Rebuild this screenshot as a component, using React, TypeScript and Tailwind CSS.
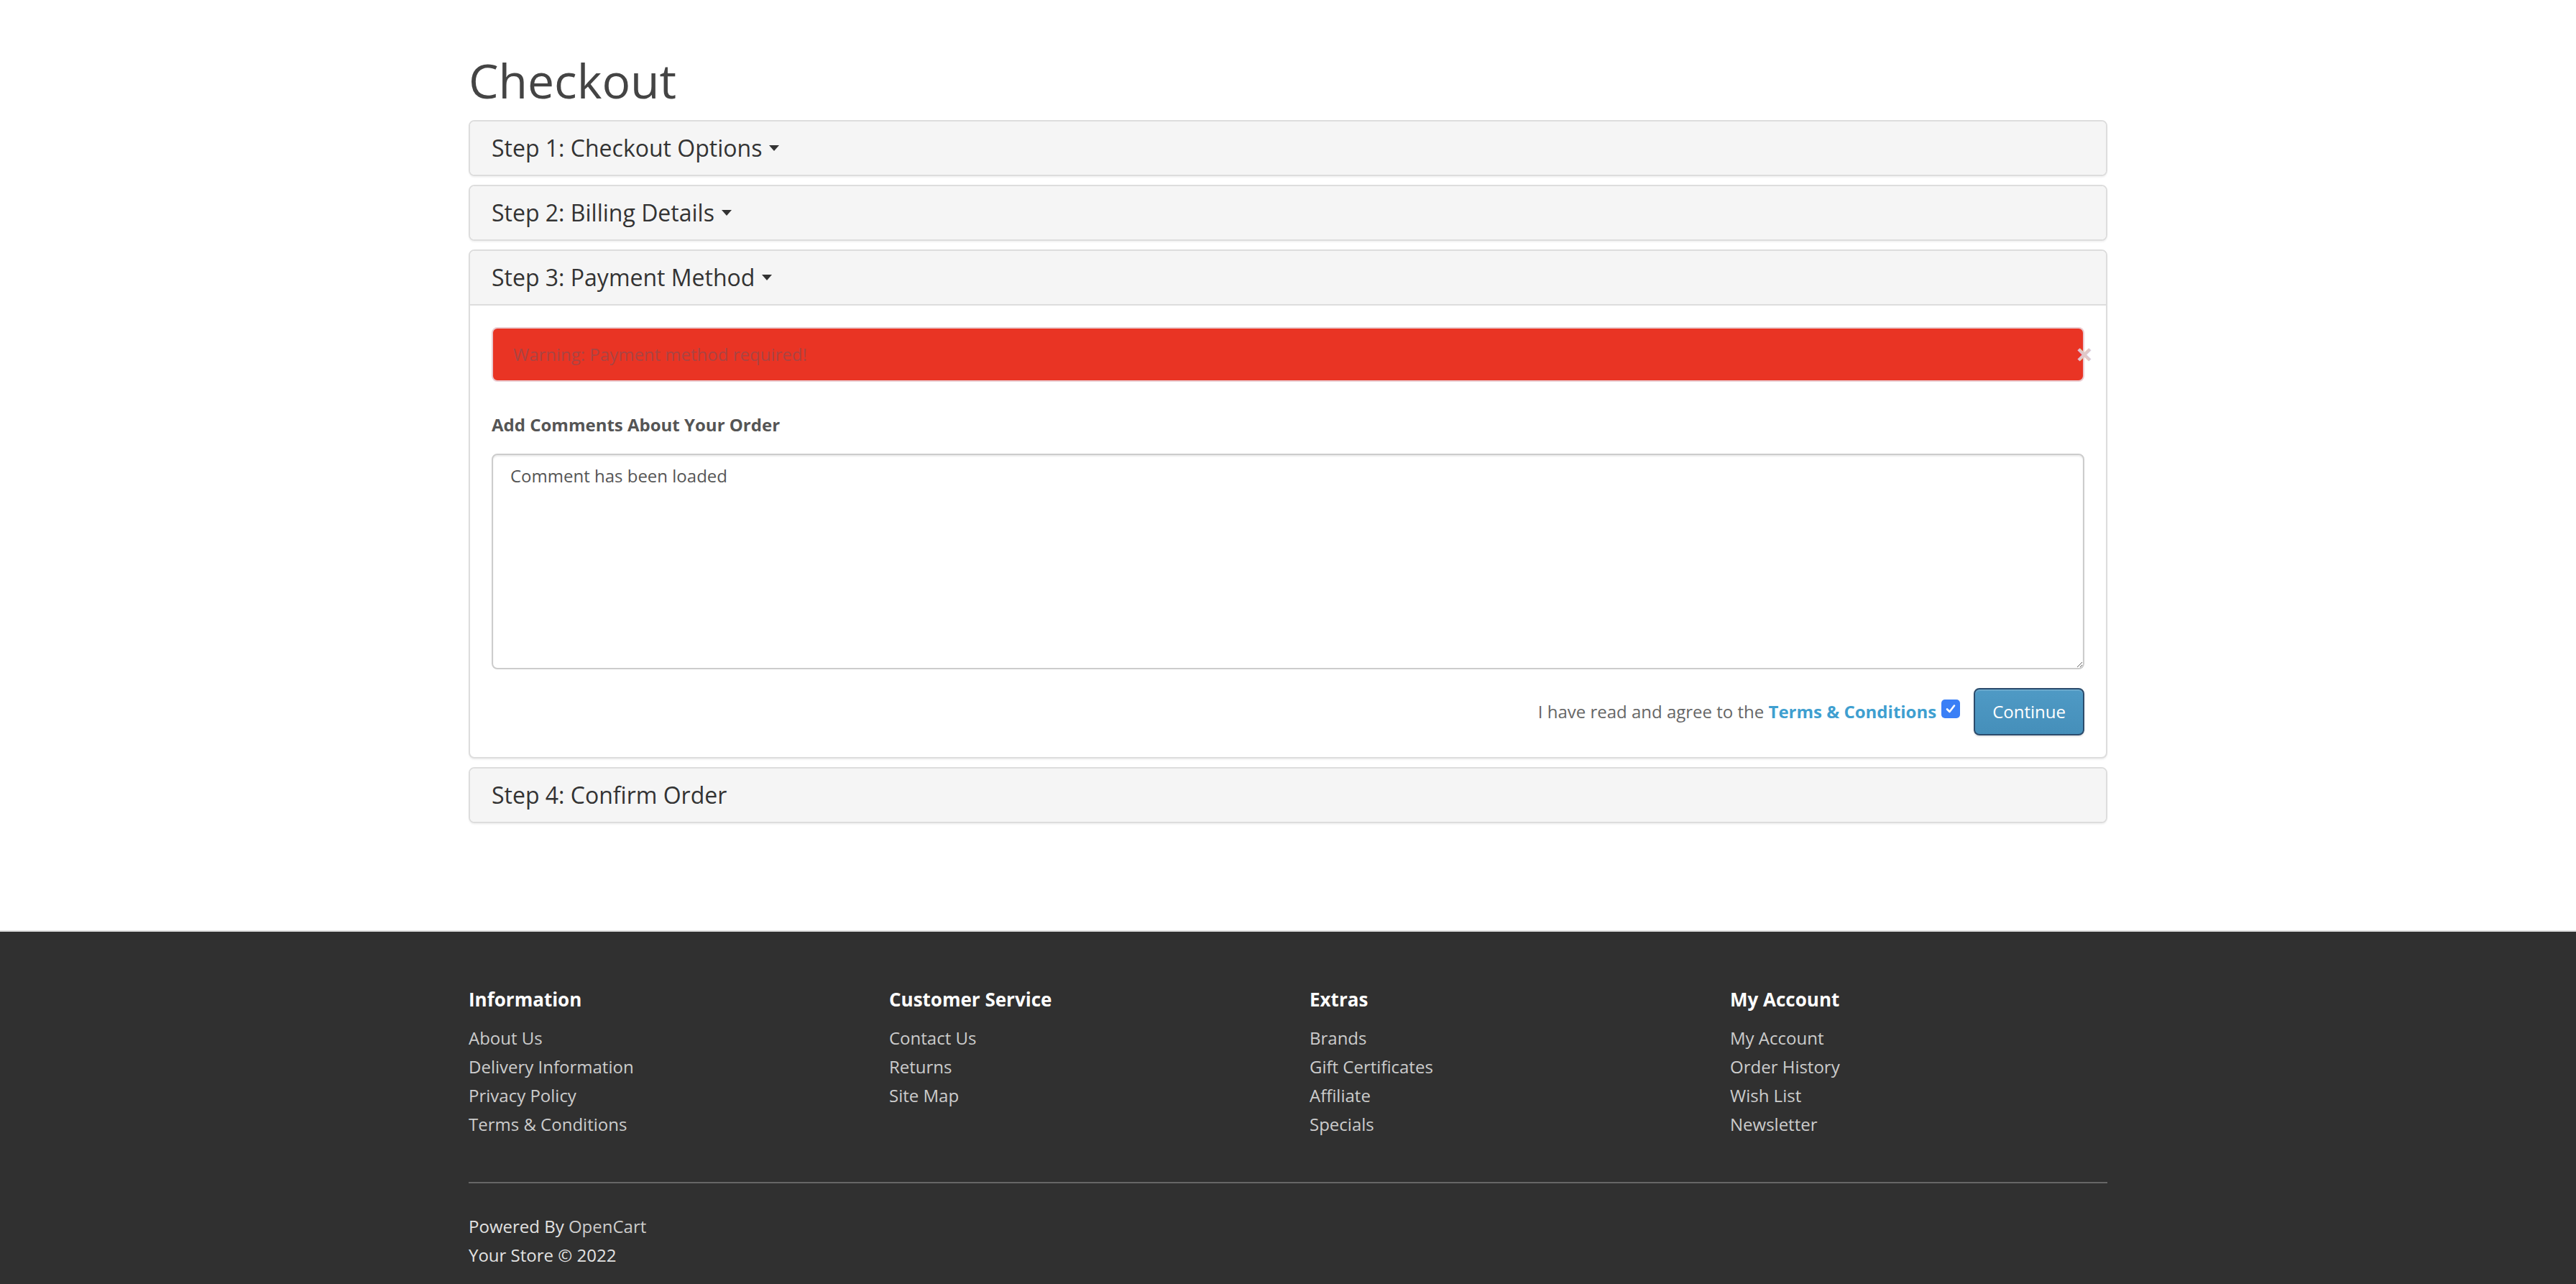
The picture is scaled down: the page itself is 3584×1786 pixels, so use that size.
import React from "react";

// ── Checkout page (OpenCart-style) ───────────────────────

const footerCols = [
    { title: "Information", links: ["About Us", "Delivery Information", "Privacy Policy", "Terms & Conditions"] },
    { title: "Customer Service", links: ["Contact Us", "Returns", "Site Map"] },
    { title: "Extras", links: ["Brands", "Gift Certificates", "Affiliate", "Specials"] },
    { title: "My Account", links: ["My Account", "Order History", "Wish List", "Newsletter"] },
];

function Caret() {
    return (
        <svg width="14" height="8" viewBox="0 0 14 8" className="ml-[10px] shrink-0">
            <path d="M0 0 L14 0 L7 8 Z" fill="#333" />
        </svg>
    );
}

function PanelHeading({ title, caret = true, open = false }: { title: string; caret?: boolean; open?: boolean }) {
    return (
        <div
            className={`bg-[#f5f5f5] px-[30px] py-[20px] rounded-t-[6px] ${
                open ? "border-b-2 border-[#ddd]" : "rounded-b-[6px]"
            }`}
        >
            <h4 className="flex items-center text-[32px] leading-[34px] text-[#333] font-normal">
                {title}
                {caret && <Caret />}
            </h4>
        </div>
    );
}

function Panel({ children, first = false }: { children: React.ReactNode; first?: boolean }) {
    return (
        <div
            className={`border-2 border-[#ddd] rounded-[8px] bg-white shadow-[0_2px_2px_rgba(0,0,0,0.05)] ${
                first ? "" : "mt-[12px]"
            }`}
        >
            {children}
        </div>
    );
}

export default function App() {
    return (
        <div className="min-h-screen bg-white font-['Open_Sans',sans-serif] text-[24px] leading-[40px] text-[#666]">
            {/* Content */}
            <div className="w-[2340px] mx-auto px-[30px] pt-[75px] pb-[149px]">
                <h1 className="text-[66px] leading-[72px] text-[#444] font-normal mb-[20px]">Checkout</h1>

                <Panel first>
                    <PanelHeading title="Step 1: Checkout Options" />
                </Panel>
                <Panel>
                    <PanelHeading title="Step 2: Billing Details" />
                </Panel>
                <Panel>
                    <PanelHeading title="Step 3: Payment Method" open />
                    <div className="p-[30px]">
                        {/* Alert */}
                        <div className="relative flex items-center bg-[#e93424] border-2 border-[#ebccd1] rounded-[8px] pl-[28px] pr-[70px] py-[16px] mb-[40px]">
                            <span className="text-[#a94442] leading-[40px]">Warning: Payment method required!</span>
                            <span className="absolute right-[-14px] top-[14px] text-[42px] leading-[42px] font-bold text-[#e0c8c8]">
                                ×
                            </span>
                        </div>

                        <p className="font-bold text-[#555] leading-[40px] mb-[20px]">Add Comments About Your Order</p>
                        <textarea
                            readOnly
                            defaultValue="Comment has been loaded"
                            className="block w-full h-[300px] border-2 border-[#ccc] rounded-[8px] px-[24px] py-[12px] text-[24px] leading-[34px] text-[#555] font-['Open_Sans',sans-serif] shadow-[inset_0_2px_2px_rgba(0,0,0,0.075)] outline-none"
                        />

                        {/* Buttons */}
                        <div className="flex items-center justify-end mt-[26px]">
                            <span className="text-[#666]">
                                I have read and agree to the{" "}
                                <a href="#" className="font-bold text-[#3f9fd0]">
                                    Terms &amp; Conditions
                                </a>
                            </span>
                            <span className="ml-[7px] mb-[8px] w-[26px] h-[26px] rounded-[5px] bg-[#3a7ff6] flex items-center justify-center">
                                <svg width="16" height="16" viewBox="0 0 16 16">
                                    <path d="M3 8.5 L6.5 12 L13 3.5" stroke="white" strokeWidth="2.6" fill="none" strokeLinecap="round" strokeLinejoin="round" />
                                </svg>
                            </span>
                            <button className="ml-[19px] px-[24px] py-[14px] text-[24px] leading-[34px] text-white rounded-[8px] border-2 border-[#2c4c6c] bg-gradient-to-b from-[#4f9ac5] to-[#458fba] shadow-[inset_0_2px_0_rgba(255,255,255,0.15),0_2px_2px_rgba(0,0,0,0.1)]">
                                Continue
                            </button>
                        </div>
                    </div>
                </Panel>
                <Panel>
                    <PanelHeading title="Step 4: Confirm Order" caret={false} />
                </Panel>
            </div>

            {/* Footer */}
            <footer className="bg-[#303030] border-t-2 border-[#ddd] text-[#e2e2e2] pt-[60px]">
                <div className="w-[2340px] mx-auto px-[30px]">
                    <div className="grid grid-cols-4 -mx-[30px]">
                        {footerCols.map((col) => (
                            <div key={col.title} className="px-[30px]">
                                <h5 className="mt-[20px] mb-[20px] text-[26px] leading-[28px] font-bold text-white">{col.title}</h5>
                                <ul className="mb-[20px]">
                                    {col.links.map((l) => (
                                        <li key={l} className="leading-[40px]">
                                            <a href="#" className="text-[#ccc]">
                                                {l}
                                            </a>
                                        </li>
                                    ))}
                                </ul>
                            </div>
                        ))}
                    </div>
                    <hr className="mt-[40px] mb-[40px] border-0 border-b-2 border-[#666]" />
                    <p className="leading-[40px] pb-[20px]">
                        Powered By{" "}
                        <a href="#" className="text-[#ccc]">
                            OpenCart
                        </a>
                        <br />
                        Your Store © 2022
                    </p>
                </div>
            </footer>
        </div>
    );
}
